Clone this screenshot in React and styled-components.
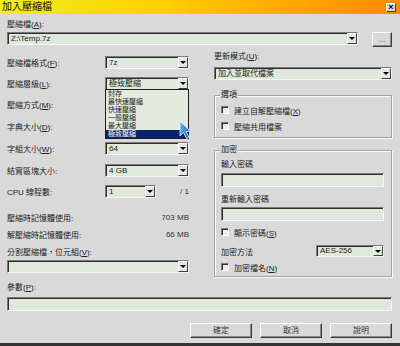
import React from "react";
import styled, { createGlobalStyle } from "styled-components";

const GlobalStyle = createGlobalStyle`
  html, body {
    margin: 0;
    padding: 0;
    background: #d9d9d9;
  }
  body {
    font-family: "Liberation Sans", "Noto Sans CJK TC", sans-serif;
  }
`;

const Window = styled.div`
  width: 400px;
  height: 346px;
  box-sizing: border-box;
  background: #d9d9d9;
  border-bottom: 3px solid #353535;
  display: flex;
  flex-direction: column;
  font-family: "Liberation Sans", "Noto Sans CJK TC", sans-serif;
  font-size: 8px;
  color: #222;
  overflow: hidden;
`;

const TitleBar = styled.div`
  height: 14px;
  flex: none;
  display: flex;
  align-items: center;
  justify-content: space-between;
  padding: 0 4px 0 2px;
  background: linear-gradient(to right, #f0ee1c 0%, #ffd000 40%, #ffb000 65%, #ff8a00 100%);
`;

const Title = styled.span`
  font-size: 10px;
  line-height: 14px;
  color: #111;
`;

const CloseButton = styled.span`
  width: 10px;
  height: 9px;
  box-sizing: border-box;
  background: #d9d9d9;
  border: 1px solid;
  border-color: #fff #404040 #404040 #fff;
  font-size: 9px;
  line-height: 6px;
  text-align: center;
  font-weight: bold;
  color: #000;
`;

const Body = styled.div`
  flex: 1;
  display: flex;
  flex-direction: column;
  padding: 0 8px 0 7px;
`;

const Label = styled.div`
  height: 10px;
  line-height: 10px;
  white-space: nowrap;
  margin-top: ${(p) => p.$mt || 0}px;
`;

const Key = styled.span`
  text-decoration: underline;
`;

const Field = styled.div`
  box-sizing: border-box;
  display: flex;
  align-items: center;
  flex: none;
  width: ${(p) => (p.$w ? `${p.$w}px` : "100%")};
  height: ${(p) => p.$h || 13}px;
  margin-top: ${(p) => p.$mt || 0}px;
  background: #dfe9db;
  border: 1px solid;
  border-color: #7a7a7a #f8f8f8 #f8f8f8 #7a7a7a;
  box-shadow: inset 1px 1px 0 #2e2e2e;
  padding-left: 3px;
  overflow: hidden;
`;

const FieldText = styled.span`
  flex: 1;
  white-space: nowrap;
  line-height: 10px;
`;

const DropButton = styled.span`
  width: 10px;
  height: 100%;
  box-sizing: border-box;
  flex: none;
  background: #e3e7e1;
  border-left: 1px solid #fff;
  border-top: 1px solid #fff;
  border-right: 1px solid #404040;
  border-bottom: 1px solid #404040;
  display: flex;
  align-items: center;
  justify-content: center;

  &::after {
    content: "";
    border-left: 3px solid transparent;
    border-right: 3px solid transparent;
    border-top: 3px solid #000;
  }
`;

const PathRow = styled.div`
  display: flex;
  justify-content: space-between;
  align-items: flex-start;
  margin-top: 2px;
`;

const BrowseButton = styled.button`
  width: 20px;
  height: 15px;
  padding: 0;
  box-sizing: border-box;
  background: #d9d9d9;
  border: 1px solid;
  border-color: #fff #404040 #404040 #fff;
  box-shadow: inset -1px -1px 0 #8a8a8a;
  font-family: inherit;
  font-size: 8px;
  line-height: 8px;
  color: #444;
`;

const Columns = styled.div`
  display: flex;
  justify-content: space-between;
  align-items: flex-start;
`;

const LeftCol = styled.div`
  width: 182px;
  display: flex;
  flex-direction: column;
  padding-top: 9px;
`;

const RightCol = styled.div`
  width: 178px;
  display: flex;
  flex-direction: column;
  padding-top: 5px;
`;

const Row = styled.div`
  display: flex;
  align-items: center;
  justify-content: space-between;
  height: ${(p) => p.$h || 13}px;
  margin-top: ${(p) => p.$mt ?? 8}px;
  white-space: nowrap;
`;

const ComboSlot = styled.div`
  position: relative;
  display: flex;
  align-items: center;
  width: ${(p) => p.$w || 84}px;
`;

const DropList = styled.div`
  position: absolute;
  left: 0;
  top: 12px;
  width: 84px;
  box-sizing: border-box;
  background: #e2ebde;
  border: 1px solid #1c1c1c;
  padding: 0;
  z-index: 5;
`;

const DropItem = styled.div`
  height: 8px;
  font-size: 7px;
  line-height: 8px;
  padding-left: 2px;
  white-space: nowrap;
  overflow: hidden;
  background: ${(p) => (p.$active ? "#0a246a" : "transparent")};
  color: ${(p) => (p.$active ? "#fff" : "#222")};
`;

const Cursor = styled.svg`
  position: absolute;
  left: 74px;
  top: 43px;
  z-index: 6;
`;

const Value = styled.span`
  color: #333;
  margin-left: auto;
`;

const Group = styled.div`
  box-sizing: border-box;
  height: ${(p) => p.$h}px;
  margin-top: ${(p) => p.$mt}px;
  border: 1px solid #a2a2a2;
  box-shadow: 1px 1px 0 #fbfbfb, inset 1px 1px 0 #fbfbfb;
  padding: 0 7px 0 6px;
  display: flex;
  flex-direction: column;
`;

const Legend = styled.div`
  align-self: flex-start;
  height: 10px;
  line-height: 10px;
  margin: -6px 0 0 -1px;
  padding: 0 1px;
  background: #d9d9d9;
`;

const Check = styled.div`
  display: flex;
  align-items: center;
  gap: 5px;
  height: 10px;
  margin-top: ${(p) => p.$mt}px;
  white-space: nowrap;
`;

const Box = styled.span`
  width: 8px;
  height: 8px;
  box-sizing: border-box;
  border: 1px solid;
  border-color: #7a7a7a #fff #fff #7a7a7a;
  box-shadow: inset 1px 1px 0 #303030;
  background: #ededed;
`;

const ButtonRow = styled.div`
  display: flex;
  justify-content: flex-end;
  gap: 8px;
  margin-top: 12px;
`;

const PushButton = styled.button`
  width: 62px;
  height: 15px;
  padding: 0;
  box-sizing: border-box;
  background: #d9d9d9;
  border: 1px solid;
  border-color: #fff #3a3a3a #3a3a3a #fff;
  box-shadow: inset -1px -1px 0 #8a8a8a;
  font-family: inherit;
  font-size: 8px;
  line-height: 10px;
  color: #333;
`;

function Combo({ value = "", w, h, mt }) {
  return (
    <Field $w={w} $h={h} $mt={mt}>
      <FieldText>{value}</FieldText>
      <DropButton />
    </Field>
  );
}

const levels = ["封存", "最快速壓縮", "快速壓縮", "一般壓縮", "最大壓縮", "極致壓縮"];

export default function App() {
  return (
    <>
      <GlobalStyle />
      <Window>
        <TitleBar>
          <Title>加入壓縮檔</Title>
          <CloseButton>×</CloseButton>
        </TitleBar>
        <Body>
          <Label $mt={6}>
            壓縮檔(<Key>A</Key>):
          </Label>
          <PathRow>
            <Combo value={"Z:\\Temp.7z"} w={351} />
            <BrowseButton>...</BrowseButton>
          </PathRow>

          <Columns>
            <LeftCol>
              <Row $mt={0}>
                <span>
                  壓縮檔格式(<Key>F</Key>):
                </span>
                <Combo value="7z" w={84} />
              </Row>
              <Row>
                <span>
                  壓縮層級(<Key>L</Key>):
                </span>
                <ComboSlot>
                  <Combo value="極致壓縮" w={84} />
                  <DropList>
                    {levels.map((l, i) => (
                      <DropItem key={l} $active={i === levels.length - 1}>
                        {l}
                      </DropItem>
                    ))}
                  </DropList>
                  <Cursor width="13" height="20" viewBox="0 0 13 20">
                    <defs>
                      <linearGradient id="cur" x1="0" y1="0" x2="1" y2="1">
                        <stop offset="0" stopColor="#6fb6f4" />
                        <stop offset="1" stopColor="#1160c4" />
                      </linearGradient>
                    </defs>
                    <polygon
                      points="1,1 1,16 4.5,12.5 7.5,18.5 10,17.3 7,11.5 12,11.5"
                      fill="url(#cur)"
                      stroke="#e8f2fb"
                      strokeWidth="0.8"
                    />
                  </Cursor>
                </ComboSlot>
              </Row>
              <Row>
                <span>
                  壓縮方式(<Key>M</Key>):
                </span>
                <Combo w={84} />
              </Row>
              <Row $mt={9}>
                <span>
                  字典大小(<Key>D</Key>):
                </span>
                <Combo w={84} />
              </Row>
              <Row $mt={9}>
                <span>
                  字組大小(<Key>W</Key>):
                </span>
                <Combo value="64" w={84} />
              </Row>
              <Row $mt={9}>
                <span>結實區塊大小:</span>
                <Combo value="4 GB" w={84} />
              </Row>
              <Row $mt={8}>
                <span>CPU 線程數:</span>
                <ComboSlot $w={84}>
                  <Combo value="1" w={51} />
                  <Value>/ 1</Value>
                </ComboSlot>
              </Row>
              <Row $mt={13} $h={12}>
                <span>壓縮時記憶體使用:</span>
                <Value>703 MB</Value>
              </Row>
              <Row $mt={5} $h={12}>
                <span>解壓縮時記憶體使用:</span>
                <Value>66 MB</Value>
              </Row>
              <Label $mt={8}>
                分割壓縮檔，位元組(<Key>V</Key>):
              </Label>
              <Combo w={182} mt={2} />
            </LeftCol>

            <RightCol>
              <Label>
                更新模式(<Key>U</Key>):
              </Label>
              <Combo value="加入並取代檔案" w={178} mt={5} />

              <Group $h={43} $mt={15}>
                <Legend>選項</Legend>
                <Check $mt={5}>
                  <Box />
                  <span>
                    建立自解壓縮檔(<Key>X</Key>)
                  </span>
                </Check>
                <Check $mt={6}>
                  <Box />
                  <span>壓縮共用檔案</span>
                </Check>
              </Group>

              <Group $h={127} $mt={12}>
                <Legend>加密</Legend>
                <Label $mt={5}>輸入密碼</Label>
                <Field $h={14} $mt={3} />
                <Label $mt={8}>重新輸入密碼</Label>
                <Field $h={14} $mt={2} />
                <Check $mt={6}>
                  <Box />
                  <span>
                    顯示密碼(<Key>S</Key>)
                  </span>
                </Check>
                <Row $mt={8} $h={12}>
                  <span>加密方法</span>
                  <Combo value="AES-256" w={68} h={12} />
                </Row>
                <Check $mt={5}>
                  <Box />
                  <span>
                    加密檔名(<Key>N</Key>)
                  </span>
                </Check>
              </Group>
            </RightCol>
          </Columns>

          <Label $mt={6}>
            參數(<Key>P</Key>):
          </Label>
          <Field $h={14} $mt={4} />

          <ButtonRow>
            <PushButton>確定</PushButton>
            <PushButton>取消</PushButton>
            <PushButton>說明</PushButton>
          </ButtonRow>
        </Body>
      </Window>
    </>
  );
}
